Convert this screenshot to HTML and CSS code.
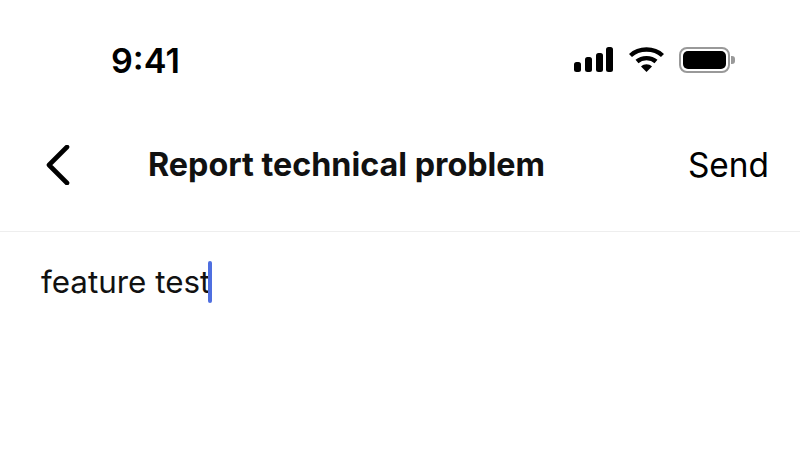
FILE: index.html
```html
<!DOCTYPE html>
<html lang="en">
<head>
    <meta charset="UTF-8">
    <title>Report technical problem</title>
    <link rel="stylesheet" href="styles.css">
</head>
<body>

    <div class="status-bar">
        <span class="time">9:41</span>
        <div class="status-icons">
            <svg class="signal" width="40" height="26" viewBox="0 0 40 26">
                <rect x="0" y="15" width="7" height="10" rx="2.5"/>
                <rect x="11" y="10" width="7" height="15" rx="2.5"/>
                <rect x="22" y="6" width="7" height="19" rx="2.5"/>
                <rect x="32" y="0" width="7" height="25" rx="2.5"/>
            </svg>
            <svg class="wifi" width="35" height="26" viewBox="0 0 35 26">
                <path d="M1.5 8.5 C10 0.5 25 0.5 33.5 8.5" fill="none" stroke="#000" stroke-width="4.4"/>
                <path d="M8 14.5 C13 10 22 10 27 14.5" fill="none" stroke="#000" stroke-width="4.4"/>
                <path d="M12 19.5 C15 16.5 20 16.5 23 19.5 L17.5 25 Z"/>
            </svg>
            <div class="battery">
                <div class="battery-body"><div class="battery-fill"></div></div>
                <div class="battery-cap"></div>
            </div>
        </div>
    </div>

    <div class="nav-bar">
        <svg class="back" width="26" height="40" viewBox="0 0 26 40">
            <path d="M22 2 L4 20 L22 38" fill="none" stroke="#000" stroke-width="4.6" stroke-linecap="round" stroke-linejoin="round"/>
        </svg>
        <h1 class="nav-title">Report technical problem</h1>
        <span class="send">Send</span>
    </div>

    <div class="message">
        <span class="message-text">feature test</span><span class="caret"></span>
    </div>

</body>
</html>
```

FILE: styles.css
```css
body {
    width: 800px;
    height: 450px;
    margin: 0;
    overflow: hidden;
    background: #fff;
    color: #111;
    font-family: Inter, 'Liberation Sans', sans-serif;
}

.status-bar {
    display: flex;
    justify-content: space-between;
    align-items: center;
    height: 60px;
    padding: 30px 65px 0 111px;
}

.time {
    font-size: 34.2px;
    font-weight: 600;
    color: #000;
}

.status-icons {
    display: flex;
    align-items: center;
    gap: 15px;
}

.status-icons svg {
    display: block;
}

.battery {
    display: flex;
    align-items: center;
    gap: 1px;
}

.battery-body {
    width: 51px;
    height: 26px;
    box-sizing: border-box;
    padding: 2px;
    border: 2px solid #999;
    border-radius: 8px;
}

.battery-fill {
    height: 100%;
    background: #000;
    border-radius: 5px;
}

.battery-cap {
    width: 4px;
    height: 8px;
    background: #999;
    border-radius: 0 3px 3px 0;
}

.nav-bar {
    display: flex;
    align-items: center;
    height: 133px;
    padding: 8px 31px 0 45px;
    border-bottom: 1px solid #eee;
}

.back {
    display: block;
}

.nav-title {
    flex: 1;
    margin: 0;
    padding-left: 77px;
    font-size: 32.3px;
    font-weight: 700;
}

.send {
    font-size: 33.4px;
    color: #000;
}

.message {
    display: flex;
    align-items: center;
    padding: 29px 41px;
    font-size: 31.4px;
}

.caret {
    width: 4px;
    height: 42px;
    margin-left: -2px;
    background: #4f6fe0;
    border-radius: 2px;
}
```
